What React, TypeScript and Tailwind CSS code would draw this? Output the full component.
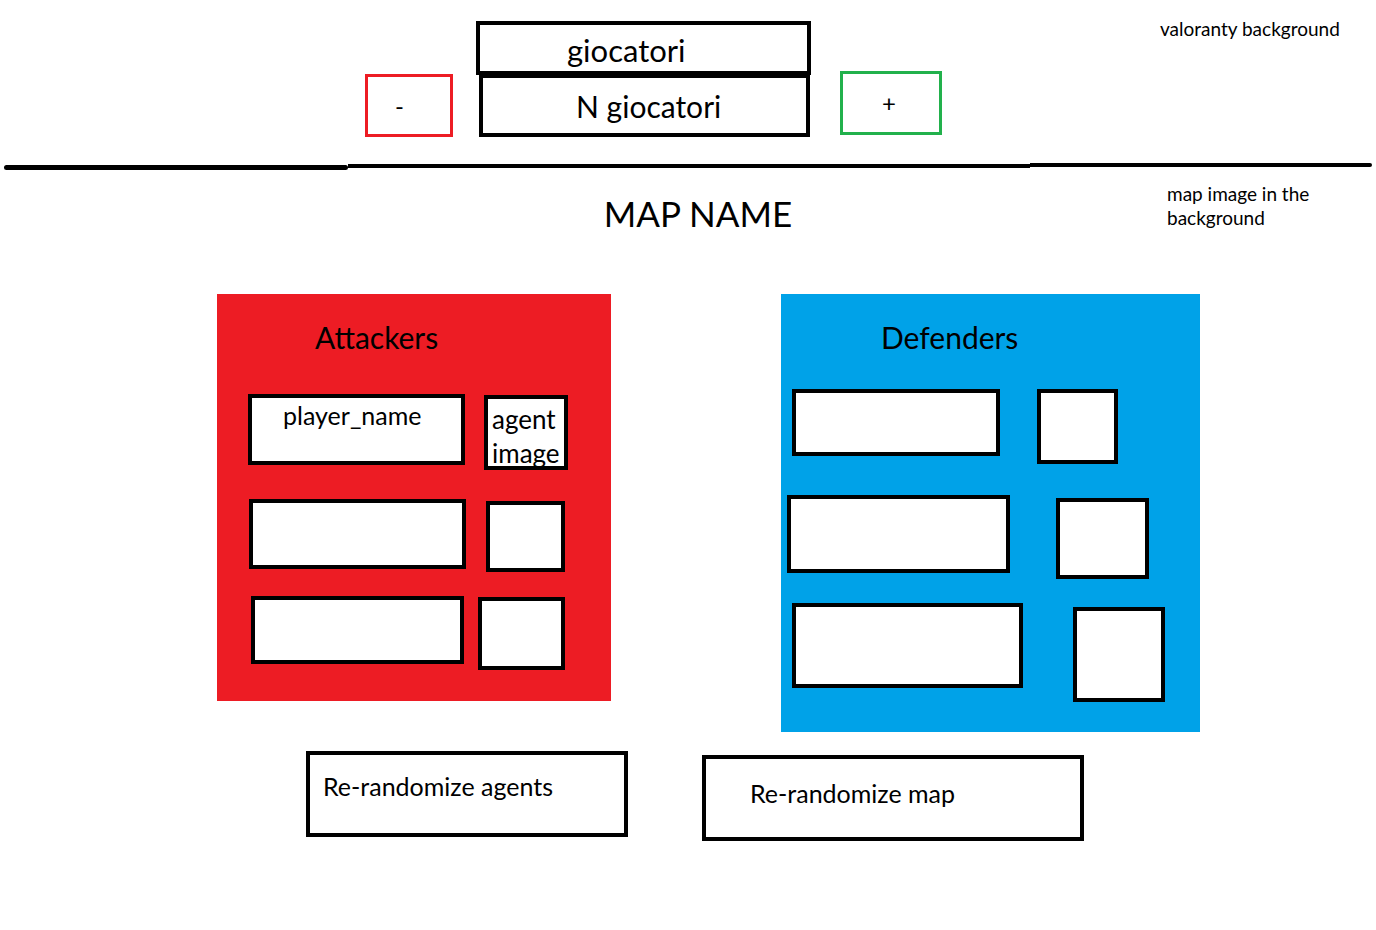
import { useState } from 'react';

type Row = { rowCls: string; nameCls: string; agentCls: string; name?: string; agent?: boolean };

const attackers: Row[] = [
  { rowCls: 'mt-[43px]', nameCls: 'ml-[31px] w-[217px] h-[71px]', agentCls: 'ml-[19px] mt-[1px] w-[84px] h-[75px]', name: 'player_name', agent: true },
  { rowCls: 'mt-[29px]', nameCls: 'ml-[32px] w-[217px] h-[70px]', agentCls: 'ml-[20px] mt-[2px] w-[79px] h-[71px]' },
  { rowCls: 'mt-[24px]', nameCls: 'ml-[34px] w-[213px] h-[68px]', agentCls: 'ml-[14px] mt-[1px] w-[87px] h-[73px]' },
];

const defenders: Row[] = [
  { rowCls: 'mt-[38px]', nameCls: 'ml-[11px] w-[208px] h-[67px]', agentCls: 'ml-[37px] w-[81px] h-[75px]' },
  { rowCls: 'mt-[31px]', nameCls: 'ml-[6px] w-[223px] h-[78px]', agentCls: 'ml-[46px] mt-[3px] w-[93px] h-[81px]' },
  { rowCls: 'mt-[24px]', nameCls: 'ml-[11px] w-[231px] h-[85px]', agentCls: 'ml-[50px] mt-[4px] w-[92px] h-[95px]' },
];

function TeamPanel({ title, rows, panelCls, titleCls }: { title: string; rows: Row[]; panelCls: string; titleCls: string }) {
  return (
    <section className={`flex flex-col pt-[29px] ${panelCls}`}>
      <h2 className={`text-[30px] leading-[28px] ${titleCls}`}>{title}</h2>
      {rows.map((r, i) => (
        <div key={i} className={`flex items-start ${r.rowCls}`}>
          <div className={`shrink-0 bg-white border-4 border-black text-[25px] leading-[24px] pl-[31px] pt-[5px] ${r.nameCls}`}>
            {r.name}
          </div>
          <div className={`shrink-0 bg-white border-4 border-black text-[26px] leading-[34px] pl-[4px] pt-[3px] ${r.agentCls}`}>
            {r.agent && (<>agent<br />image</>)}
          </div>
        </div>
      ))}
    </section>
  );
}

export default function App() {
  const [players, setPlayers] = useState(10);

  return (
    <main className="w-[1376px] h-[930px] overflow-hidden bg-white text-black font-['Lato',sans-serif]" data-players={players}>
      <header className="flex items-start h-[163px]">
        <button onClick={() => setPlayers(p => Math.max(2, p - 1))} className="ml-[365px] mt-[74px] w-[88px] h-[63px] border-[3px] border-[#ed1c24] flex items-center justify-start pl-[27px] text-[24px] leading-none">-</button>
        <div className="ml-[23px] mt-[21px] flex flex-col">
          <div className="w-[335px] h-[54px] border-4 border-black pl-[87px] pt-[10px] text-[31px] leading-[30px]">giocatori</div>
          <div className="-mt-[1px] ml-[3px] w-[331px] h-[63px] border-4 border-black pl-[93px] pt-[13px] text-[30px] leading-[30px]">N giocatori</div>
        </div>
        <button onClick={() => setPlayers(p => Math.min(10, p + 1))} className="ml-[29px] mt-[71px] w-[102px] h-[64px] border-[3px] border-[#22b14c] flex items-center justify-center pr-[4px] text-[24px] leading-none">+</button>
        <p className="ml-[218px] mt-[17px] text-[19px] leading-[24px] whitespace-nowrap">valoranty background</p>
      </header>

      <div className="flex items-start h-[7px]">
        <div className="ml-[4px] mt-[2px] w-[344px] h-[5px] rounded-full bg-black" />
        <div className="mt-[1px] w-[682px] h-[4px] bg-black" />
        <div className="w-[342px] h-[4px] rounded-r-full bg-black" />
      </div>

      <div className="flex items-start h-[124px]">
        <h1 className="ml-[500px] mt-[25px] w-[396px] text-center text-[35px] leading-[36px]">MAP NAME</h1>
        <p className="ml-[271px] mt-[12px] w-[160px] text-[19px] leading-[24px]">map image in the background</p>
      </div>

      <div className="flex items-start pl-[217px] gap-[170px]">
        <TeamPanel title="Attackers" rows={attackers} panelCls="w-[394px] h-[407px] bg-[#ed1c24]" titleCls="pl-[98px]" />
        <TeamPanel title="Defenders" rows={defenders} panelCls="w-[419px] h-[438px] bg-[#00a2e8]" titleCls="pl-[100px]" />
      </div>

      <div className="flex items-start mt-[19px]">
        <button className="ml-[306px] w-[322px] h-[86px] border-4 border-black text-left pl-[13px] pt-[19px] flex items-start text-[25px] leading-[25px]">Re-randomize agents</button>
        <button className="ml-[74px] mt-[4px] w-[382px] h-[86px] border-4 border-black text-left pl-[44px] pt-[22px] flex items-start text-[25px] leading-[25px]">Re-randomize map</button>
      </div>
    </main>
  );
}
